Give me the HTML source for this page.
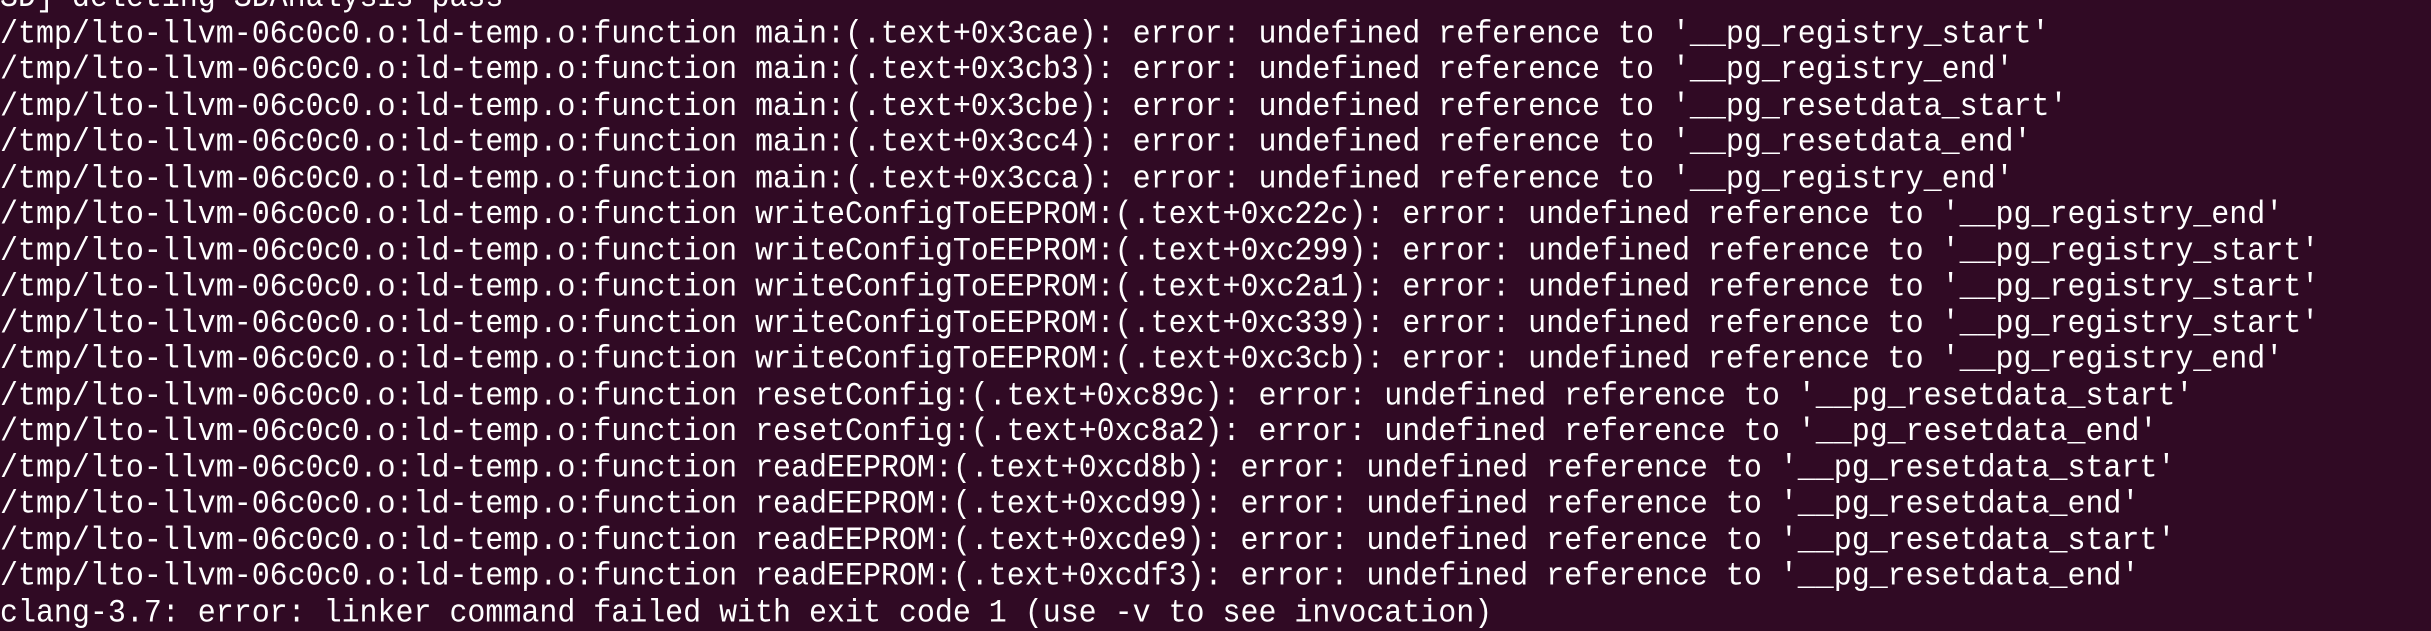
<!DOCTYPE html>
<html><head><meta charset="utf-8"><style>
html,body{margin:0;padding:0;width:2431px;height:631px;overflow:hidden;}
body{background:#300a24;position:relative;}
pre{position:absolute;left:0;top:-19px;margin:0;font-family:"Liberation Mono",monospace;font-size:30px;letter-spacing:-0.025px;line-height:33.5px;color:#ffffff;white-space:pre;transform:scaleY(1.08);transform-origin:0 0;}
</style></head><body>
<pre>SD] deleting SDAnalysis pass
/tmp/lto-llvm-06c0c0.o:ld-temp.o:function main:(.text+0x3cae): error: undefined reference to '__pg_registry_start'
/tmp/lto-llvm-06c0c0.o:ld-temp.o:function main:(.text+0x3cb3): error: undefined reference to '__pg_registry_end'
/tmp/lto-llvm-06c0c0.o:ld-temp.o:function main:(.text+0x3cbe): error: undefined reference to '__pg_resetdata_start'
/tmp/lto-llvm-06c0c0.o:ld-temp.o:function main:(.text+0x3cc4): error: undefined reference to '__pg_resetdata_end'
/tmp/lto-llvm-06c0c0.o:ld-temp.o:function main:(.text+0x3cca): error: undefined reference to '__pg_registry_end'
/tmp/lto-llvm-06c0c0.o:ld-temp.o:function writeConfigToEEPROM:(.text+0xc22c): error: undefined reference to '__pg_registry_end'
/tmp/lto-llvm-06c0c0.o:ld-temp.o:function writeConfigToEEPROM:(.text+0xc299): error: undefined reference to '__pg_registry_start'
/tmp/lto-llvm-06c0c0.o:ld-temp.o:function writeConfigToEEPROM:(.text+0xc2a1): error: undefined reference to '__pg_registry_start'
/tmp/lto-llvm-06c0c0.o:ld-temp.o:function writeConfigToEEPROM:(.text+0xc339): error: undefined reference to '__pg_registry_start'
/tmp/lto-llvm-06c0c0.o:ld-temp.o:function writeConfigToEEPROM:(.text+0xc3cb): error: undefined reference to '__pg_registry_end'
/tmp/lto-llvm-06c0c0.o:ld-temp.o:function resetConfig:(.text+0xc89c): error: undefined reference to '__pg_resetdata_start'
/tmp/lto-llvm-06c0c0.o:ld-temp.o:function resetConfig:(.text+0xc8a2): error: undefined reference to '__pg_resetdata_end'
/tmp/lto-llvm-06c0c0.o:ld-temp.o:function readEEPROM:(.text+0xcd8b): error: undefined reference to '__pg_resetdata_start'
/tmp/lto-llvm-06c0c0.o:ld-temp.o:function readEEPROM:(.text+0xcd99): error: undefined reference to '__pg_resetdata_end'
/tmp/lto-llvm-06c0c0.o:ld-temp.o:function readEEPROM:(.text+0xcde9): error: undefined reference to '__pg_resetdata_start'
/tmp/lto-llvm-06c0c0.o:ld-temp.o:function readEEPROM:(.text+0xcdf3): error: undefined reference to '__pg_resetdata_end'
clang-3.7: error: linker command failed with exit code 1 (use -v to see invocation)</pre>
</body></html>
